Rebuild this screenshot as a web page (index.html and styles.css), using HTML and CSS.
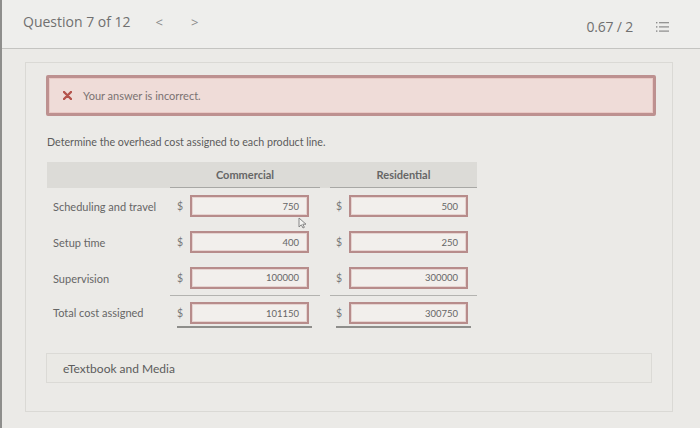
FILE: index.html
```html
<!DOCTYPE html>
<html>
<head>
<meta charset="utf-8">
<link rel="stylesheet" href="styles.css">
</head>
<body>
<header class="topbar">
  <div class="qnav">
    <span class="qtitle">Question 7 of 12</span>
    <span class="arrow prev">&lt;</span>
    <span class="arrow next">&gt;</span>
  </div>
  <div class="score">
    <span class="points">0.67 / 2</span>
    <svg class="listicon" width="13" height="12" viewBox="0 0 13 12">
      <g fill="#8a8a8a">
        <rect x="0" y="1" width="1.4" height="1.4"/>
        <rect x="0" y="5.2" width="1.4" height="1.4"/>
        <rect x="0" y="9.4" width="1.4" height="1.4"/>
      </g>
      <g stroke="#8a8a8a" stroke-width="1.2">
        <line x1="3" y1="1.7" x2="13" y2="1.7"/>
        <line x1="3" y1="5.9" x2="13" y2="5.9"/>
        <line x1="3" y1="10.1" x2="13" y2="10.1"/>
      </g>
    </svg>
  </div>
</header>

<main class="panel">
  <div class="alert">
    <svg class="xicon" width="9" height="9" viewBox="0 0 9 9">
      <path d="M1 1 L8 8 M8 1 L1 8" stroke="#b4534c" stroke-width="2.4" stroke-linecap="round"/>
    </svg>
    <span>Your answer is incorrect.</span>
  </div>

  <p class="prompt">Determine the overhead cost assigned to each product line.</p>

  <div class="sheet">
    <div class="headband">
      <div class="hlabel"></div>
      <div class="hcol com">Commercial</div>
      <div class="hcol res">Residential</div>
    </div>

    <div class="row">
      <div class="label">Scheduling and travel</div>
      <div class="cell com"><span class="dollar">$</span><div class="input">750</div></div>
      <div class="cell res"><span class="dollar">$</span><div class="input">500</div></div>
    </div>
    <div class="row">
      <div class="label">Setup time</div>
      <div class="cell com"><span class="dollar">$</span><div class="input">400</div></div>
      <div class="cell res"><span class="dollar">$</span><div class="input">250</div></div>
    </div>
    <div class="row sub">
      <div class="label">Supervision</div>
      <div class="cell com"><span class="dollar">$</span><div class="input">100000</div></div>
      <div class="cell res"><span class="dollar">$</span><div class="input">300000</div></div>
    </div>
    <div class="row total">
      <div class="label">Total cost assigned</div>
      <div class="cell com"><div class="tot"><span class="dollar">$</span><div class="input">101150</div></div></div>
      <div class="cell res"><div class="tot"><span class="dollar">$</span><div class="input">300750</div></div></div>
    </div>

    <svg class="cursor" width="9" height="12" viewBox="0 0 9 12">
      <path d="M1 1 L1 10 L3.3 7.8 L5 11 L6.4 10.3 L4.8 7.2 L8 7.2 Z" fill="#f4f4f2" stroke="#7a7a7a" stroke-width="0.9" stroke-linejoin="round"/>
    </svg>
  </div>

  <div class="media">eTextbook and Media</div>
</main>
</body>
</html>
```

FILE: styles.css
```css
html, body {
  margin: 0;
  padding: 0;
}
body {
  width: 700px;
  height: 428px;
  background: #ebeae7;
  border-left: 2px solid #8e8e8c;
  box-sizing: border-box;
  font-family: Lato, "Open Sans", sans-serif;
  color: #666;
  overflow: hidden;
}

.topbar {
  height: 49px;
  box-sizing: border-box;
  border-bottom: 1px solid #c4c4c1;
  background: #eeeeec;
  display: flex;
  align-items: center;
  justify-content: space-between;
  padding: 0 31px 0 21px;
  font-family: "Open Sans", sans-serif;
  color: #707070;
}
.qnav {
  display: flex;
  align-items: center;
  margin-top: -5px;
}
.qtitle {
  font-size: 14px;
}
.arrow {
  font-size: 13px;
  color: #8a8a8a;
}
.prev { margin-left: 25px; }
.next { margin-left: 28px; }

.score {
  display: flex;
  align-items: center;
  margin-top: 5px;
}
.points {
  font-size: 14px;
  letter-spacing: -0.2px;
}
.listicon {
  margin-left: 23px;
}

.panel {
  margin: 13px 27px 0 23px;
  height: 350px;
  box-sizing: border-box;
  border: 1px solid #dad9d5;
  padding: 12px 16px 0 20px;
}

.alert {
  height: 41px;
  box-sizing: border-box;
  border: 3px solid #bd9190;
  box-shadow: inset 0 0 0 1px #e9c9c5;
  border-radius: 2px;
  background: #efdcd8;
  display: flex;
  align-items: center;
  padding-left: 14px;
  font-size: 11px;
  color: #7a7272;
}
.xicon {
  margin-right: 11px;
}

.prompt {
  margin: 19px 0 0 1px;
  font-size: 10.7px;
  color: #5c5c5c;
}

.sheet {
  position: relative;
  width: 430px;
  margin: 14px 0 0 1px;
}

.headband,
.row {
  display: grid;
  grid-template-columns: 123px 150px 157px;
}

.headband {
  height: 26px;
  background: #dcdbd7;
}
.hcol {
  display: flex;
  align-items: center;
  justify-content: center;
  font-size: 11px;
  font-weight: 700;
  color: #666;
  border-bottom: 1.5px solid #a8a8a5;
  box-sizing: border-box;
}
.res {
  margin-left: 10px;
}

.row {
  height: 36px;
  align-items: center;
}
.label {
  padding-left: 6px;
  font-size: 11px;
  color: #666;
}
.cell {
  display: flex;
  align-items: center;
  height: 100%;
  box-sizing: border-box;
}
.cell.com { padding-left: 7px; }
.cell.res { padding-left: 6px; }
.dollar {
  width: 13px;
  font-size: 10.5px;
  color: #777;
}
.input {
  width: 119px;
  height: 22px;
  box-sizing: border-box;
  border: 2px solid #b78c8b;
  box-shadow: inset 0 0 0 1px #e6d3d0;
  background: #f2efec;
  display: flex;
  align-items: center;
  justify-content: flex-end;
  padding-right: 8px;
  font-size: 9.5px;
  color: #666;
}

.row.sub .cell {
  border-bottom: 1.5px solid #b3b3b0;
}

.row.total {
  height: 34px;
  align-items: start;
}
.row.total .label {
  padding-top: 10px;
}
.row.total .cell {
  align-items: flex-start;
  padding-top: 6px;
}
.tot {
  display: flex;
  align-items: center;
  padding-bottom: 2px;
  padding-right: 3px;
  border-bottom: 2px solid #8e8e8b;
}

.cursor {
  position: absolute;
  left: 251px;
  top: 55px;
}

.media {
  margin-top: 23px;
  width: 606px;
  height: 30px;
  box-sizing: border-box;
  border: 1px solid #dbdad6;
  background: #eae9e5;
  display: flex;
  align-items: center;
  padding-left: 16px;
  font-size: 12px;
  color: #5c5c5c;
}
```
